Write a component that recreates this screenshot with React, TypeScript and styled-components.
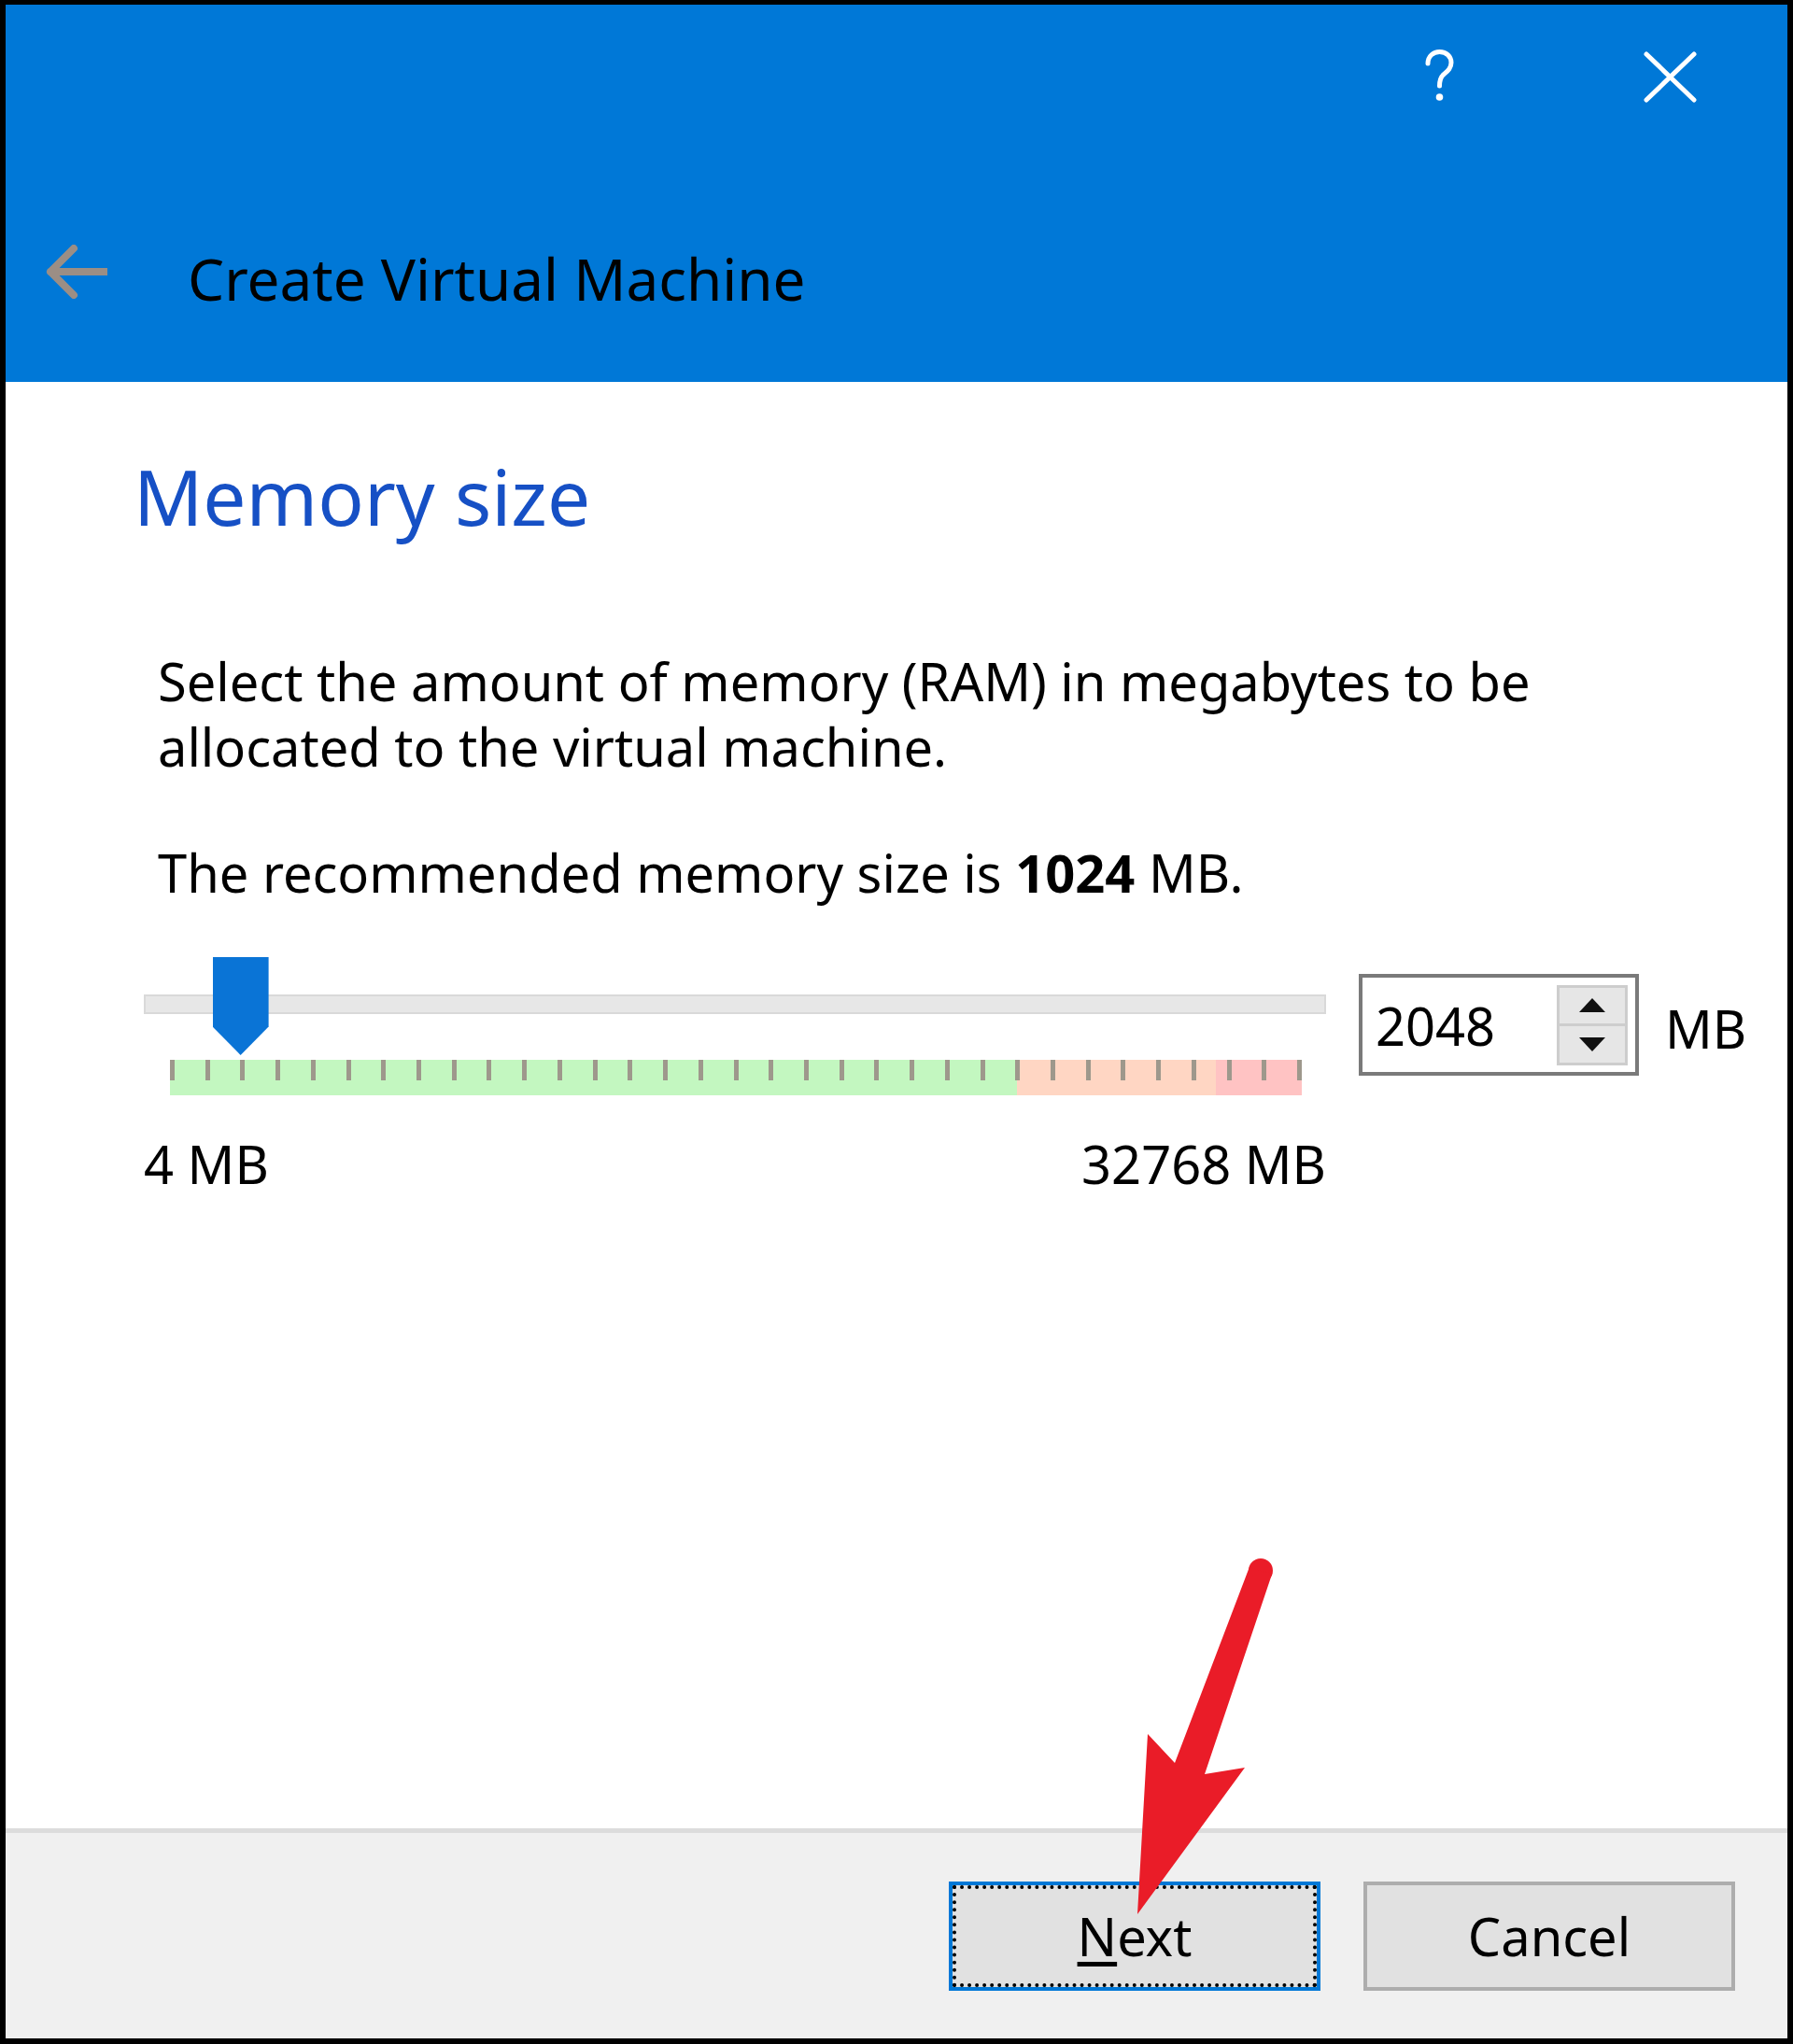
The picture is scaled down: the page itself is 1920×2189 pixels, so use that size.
import styled, { createGlobalStyle } from "styled-components";

const GlobalStyle = createGlobalStyle`
  html, body {
    margin: 0;
    padding: 0;
    background: #000;
  }
  body {
    font-family: "Noto Sans", "Open Sans", sans-serif;
  }
`;

const MIN_MB = 4;
const MAX_MB = 32768;
const VALUE_MB = 2048;
const TICK_COUNT = 33;
// where the tick scale sits inside the slider column
const SCALE_LEFT = 28;
const SCALE_WIDTH = 1212;
const THUMB_WIDTH = 60;

export default function App() {
  const fraction = (VALUE_MB - MIN_MB) / (MAX_MB - MIN_MB);
  const thumbLeft = SCALE_LEFT + fraction * SCALE_WIDTH - THUMB_WIDTH / 2;
  const ticks = Array.from({ length: TICK_COUNT }, (_, i) => i);

  return (
    <>
      <GlobalStyle />
      <Window>
        <TitleBar>
          <ControlsRow>
            <HelpIcon width="33" height="57" viewBox="0 0 33 57">
              <path
                d="M4 15 C4 7 10 2.5 16.5 2.5 C24 2.5 29 7.5 29 14 C29 20.5 24.5 23.5 20.5 27 C17.5 30 16.5 33 16.5 39"
                fill="none"
                stroke="#fff"
                strokeWidth="5"
                strokeLinecap="round"
              />
              <circle cx="16.5" cy="51" r="3.8" fill="#fff" />
            </HelpIcon>
            <CloseIcon width="57" height="55" viewBox="0 0 57 55">
              <path
                d="M3 3 L54 52 M54 3 L3 52"
                stroke="#fff"
                strokeWidth="5"
                strokeLinecap="round"
              />
            </CloseIcon>
          </ControlsRow>
          <HeaderRow>
            <svg width="67" height="58" viewBox="0 0 67 58">
              <path
                d="M31 4 L6 29 L31 54 M6 29 L66 29"
                fill="none"
                stroke="#9b8e85"
                strokeWidth="8"
                strokeLinecap="round"
                strokeLinejoin="round"
              />
            </svg>
            <WizardTitle>Create Virtual Machine</WizardTitle>
          </HeaderRow>
        </TitleBar>

        <Body>
          <Heading>Memory size</Heading>
          <Description>
            Select the amount of memory (RAM) in megabytes to be
            <br />
            allocated to the virtual machine.
          </Description>
          <Recommended>
            The recommended memory size is <strong>1024</strong> MB.
          </Recommended>

          <SliderRow>
            <SliderColumn>
              <TrackArea>
                <Track />
                <Thumb style={{ left: thumbLeft }} />
              </TrackArea>
              <TickScale>
                {ticks.map((i) => (
                  <Tick key={i} />
                ))}
              </TickScale>
              <RangeLabels>
                <span>4 MB</span>
                <span>32768 MB</span>
              </RangeLabels>
            </SliderColumn>
            <SpinBox>
              <SpinValue>{VALUE_MB}</SpinValue>
              <SpinButtons>
                <SpinButton>
                  <svg width="28" height="15" viewBox="0 0 28 15">
                    <polygon points="14,0 28,15 0,15" fill="#111" />
                  </svg>
                </SpinButton>
                <SpinButton>
                  <svg width="28" height="15" viewBox="0 0 28 15">
                    <polygon points="0,0 28,0 14,15" fill="#111" />
                  </svg>
                </SpinButton>
              </SpinButtons>
            </SpinBox>
            <UnitLabel>MB</UnitLabel>
          </SliderRow>
        </Body>

        <Footer>
          <DialogButton $focused>
            <Mnemonic>N</Mnemonic>ext
          </DialogButton>
          <DialogButton>Cancel</DialogButton>
        </Footer>

        <Callout width="180" height="400" viewBox="1200 1660 180 400">
          <circle cx="1350" cy="1682" r="13" fill="#ea1c28" />
          <polygon
            points="1338,1678 1258,1888 1229,1857 1218,2050 1333,1893 1290,1900 1362,1686"
            fill="#ea1c28"
          />
        </Callout>
      </Window>
    </>
  );
}

const Window = styled.div`
  position: relative;
  width: 1920px;
  height: 2189px;
  box-sizing: border-box;
  border-style: solid;
  border-color: #000;
  border-width: 5px 6px 6px 6px;
  display: flex;
  flex-direction: column;
  background: #fff;
`;

const TitleBar = styled.div`
  height: 404px;
  flex-shrink: 0;
  background: #0078d7;
  display: flex;
  flex-direction: column;
`;

const ControlsRow = styled.div`
  height: 160px;
  box-sizing: border-box;
  padding: 48px 97px 0 0;
  display: flex;
  justify-content: flex-end;
  align-items: flex-start;
  gap: 202px;
`;

const HelpIcon = styled.svg`
  display: block;
`;

const CloseIcon = styled.svg`
  display: block;
  margin-top: 2px;
`;

const HeaderRow = styled.div`
  margin-top: 97px;
  padding-left: 42px;
  display: flex;
  align-items: flex-start;
  svg {
    display: block;
  }
`;

const WizardTitle = styled.div`
  margin: 4px 0 0 86px;
  font-size: 62px;
  line-height: 64px;
  color: #000;
`;

const Body = styled.div`
  flex: 1;
  box-sizing: border-box;
  padding: 82px 0 0 137px;
  background: #fff;
  color: #000;
`;

const Heading = styled.h1`
  margin: 0;
  font-size: 82px;
  line-height: 80px;
  font-weight: 400;
  color: #1650c5;
`;

const Description = styled.p`
  margin: 123px 0 0 26px;
  font-size: 56px;
  line-height: 70px;
`;

const Recommended = styled.p`
  margin: 65px 0 0 26px;
  font-size: 56px;
  line-height: 70px;
  strong {
    font-weight: 700;
  }
`;

const SliderRow = styled.div`
  margin: 56px 0 0 11px;
  display: flex;
  align-items: flex-start;
`;

const SliderColumn = styled.div`
  width: 1266px;
`;

const TrackArea = styled.div`
  position: relative;
  height: 105px;
  box-sizing: border-box;
  padding-top: 40px;
`;

const Track = styled.div`
  height: 21px;
  box-sizing: border-box;
  background: #e7e7e7;
  border: 2px solid #d9d9d9;
`;

const Thumb = styled.div`
  position: absolute;
  top: 0;
  width: ${THUMB_WIDTH}px;
  height: 105px;
  background: #0a74d6;
  clip-path: polygon(0 0, 100% 0, 100% 71%, 50% 100%, 0 71%);
`;

const TickScale = styled.div`
  margin: 5px 26px 0 ${SCALE_LEFT}px;
  height: 38px;
  display: flex;
  justify-content: space-between;
  align-items: flex-start;
  background: linear-gradient(
    to right,
    #c3f7c0 0%,
    #c3f7c0 74.8%,
    #ffd6c3 74.8%,
    #ffd6c3 92.4%,
    #ffc3c3 92.4%,
    #ffc3c3 100%
  );
`;

const Tick = styled.div`
  width: 5px;
  height: 22px;
  background: #9e988c;
`;

const RangeLabels = styled.div`
  margin-top: 38px;
  display: flex;
  justify-content: space-between;
  font-size: 56px;
  line-height: 70px;
`;

const SpinBox = styled.div`
  margin: 18px 0 0 35px;
  width: 300px;
  height: 109px;
  box-sizing: border-box;
  border: 4px solid #7a7a7a;
  background: #fff;
  display: flex;
  align-items: center;
  justify-content: space-between;
  padding: 0 8px 0 14px;
`;

const SpinValue = styled.span`
  font-size: 56px;
  line-height: 70px;
`;

const SpinButtons = styled.div`
  width: 76px;
  height: 86px;
  display: flex;
  flex-direction: column;
`;

const SpinButton = styled.div`
  flex: 1;
  box-sizing: border-box;
  background: #e6e6e6;
  border: 3px solid #cdcdcd;
  display: flex;
  align-items: center;
  justify-content: center;
  & + & {
    border-top-width: 0;
  }
  svg {
    display: block;
  }
`;

const UnitLabel = styled.span`
  margin: 41px 0 0 28px;
  font-size: 56px;
  line-height: 70px;
`;

const Footer = styled.div`
  height: 225px;
  flex-shrink: 0;
  box-sizing: border-box;
  border-top: 5px solid #dcdcdc;
  background: #f0f0f0;
  display: flex;
  justify-content: flex-end;
  align-items: center;
  gap: 46px;
  padding-right: 56px;
`;

const DialogButton = styled.button<{ $focused?: boolean }>`
  width: 398px;
  height: 117px;
  box-sizing: border-box;
  padding: 0;
  background: #e1e1e1;
  border: 4px solid ${(p) => (p.$focused ? "#0078d7" : "#adadad")};
  outline: ${(p) => (p.$focused ? "4px dotted #000" : "none")};
  outline-offset: -8px;
  font-family: "Noto Sans", "Open Sans", sans-serif;
  font-size: 56px;
  line-height: 70px;
  color: #000;
`;

const Mnemonic = styled.span`
  text-decoration: underline;
  text-decoration-thickness: 5px;
  text-underline-offset: 6px;
`;

const Callout = styled.svg`
  position: absolute;
  left: 1194px;
  top: 1655px;
  pointer-events: none;
`;
